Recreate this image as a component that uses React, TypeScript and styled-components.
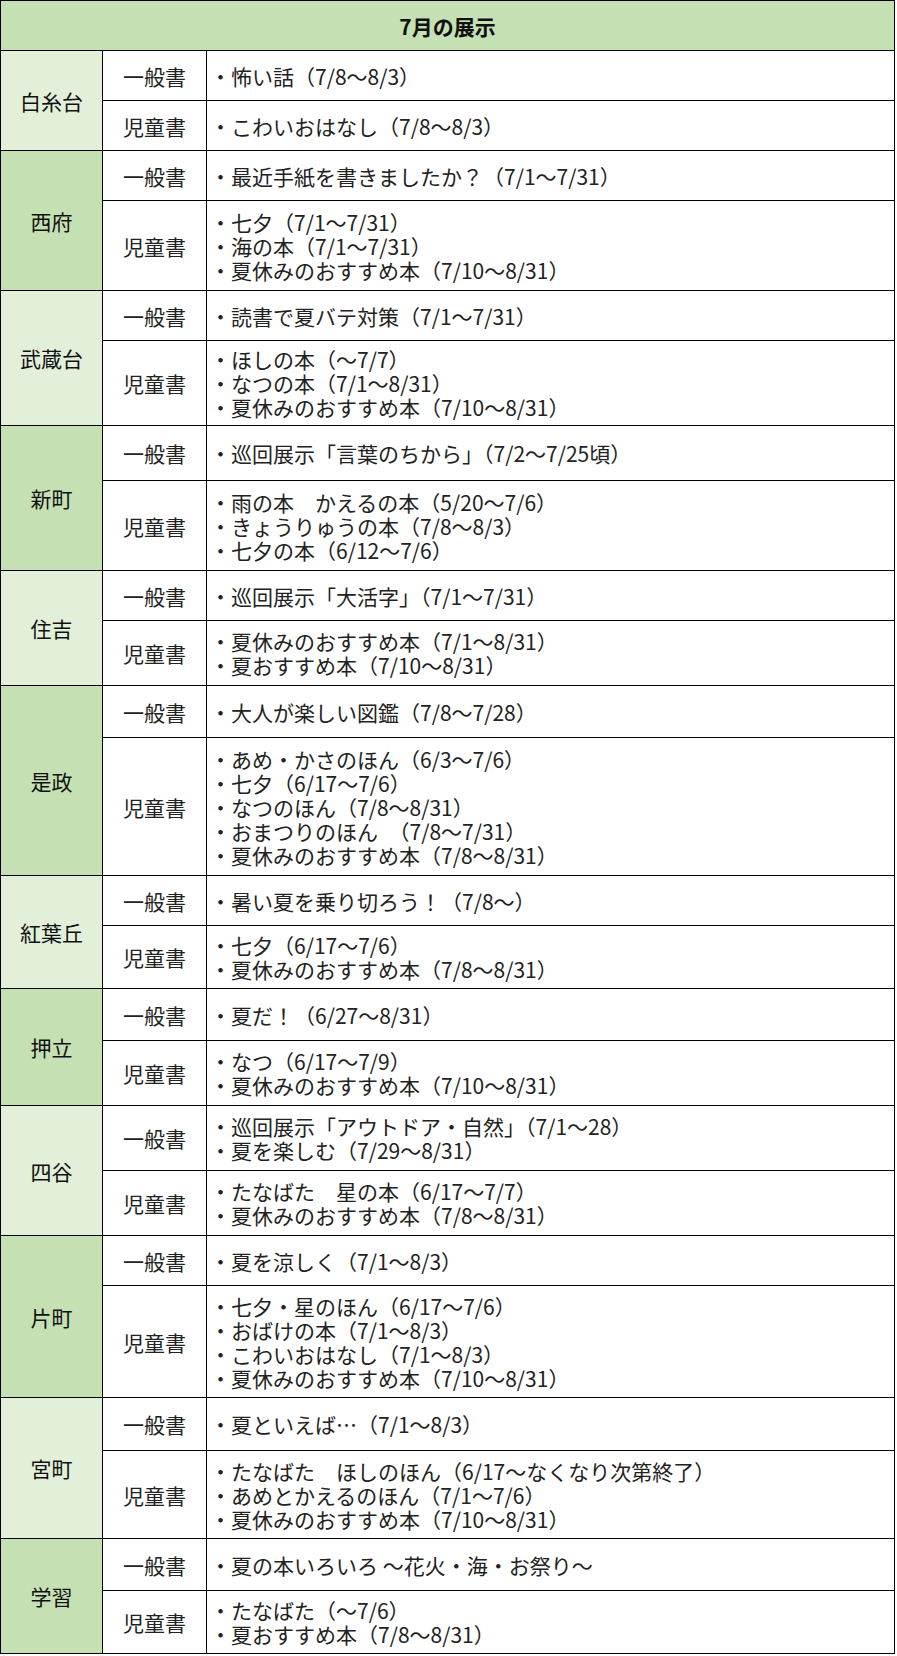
import React from "react";
import styled, { createGlobalStyle } from "styled-components";

const GlobalStyle = createGlobalStyle`
  html, body { margin: 0; padding: 0; background: #ffffff; }
  body {
    font-family: "Noto Sans CJK JP", "Noto Sans", sans-serif;
    color: #111;
  }
  * { box-sizing: border-box; }
`;

const LIGHT = "#e2efd9";
const DARK = "#c5e0b3";

type Row = { type: string; items: string[]; h: number };
type Group = { name: string; rows: [Row, Row] };

const data: Group[] = [
  {
    name: "白糸台",
    rows: [
      { type: "一般書", items: ["・怖い話（7/8～8/3）"], h: 50 },
      { type: "児童書", items: ["・こわいおはなし（7/8～8/3）"], h: 50 },
    ],
  },
  {
    name: "西府",
    rows: [
      { type: "一般書", items: ["・最近手紙を書きましたか？（7/1～7/31）"], h: 50 },
      {
        type: "児童書",
        items: ["・七夕（7/1～7/31）", "・海の本（7/1～7/31）", "・夏休みのおすすめ本（7/10～8/31）"],
        h: 90,
      },
    ],
  },
  {
    name: "武蔵台",
    rows: [
      { type: "一般書", items: ["・読書で夏バテ対策（7/1～7/31）"], h: 50 },
      {
        type: "児童書",
        items: ["・ほしの本（～7/7）", "・なつの本（7/1～8/31）", "・夏休みのおすすめ本（7/10～8/31）"],
        h: 85,
      },
    ],
  },
  {
    name: "新町",
    rows: [
      { type: "一般書", items: ["・巡回展示「言葉のちから」（7/2～7/25頃）"], h: 55 },
      {
        type: "児童書",
        items: ["・雨の本　かえるの本（5/20～7/6）", "・きょうりゅうの本（7/8～8/3）", "・七夕の本（6/12～7/6）"],
        h: 90,
      },
    ],
  },
  {
    name: "住吉",
    rows: [
      { type: "一般書", items: ["・巡回展示「大活字」（7/1～7/31）"], h: 50 },
      {
        type: "児童書",
        items: ["・夏休みのおすすめ本（7/1～8/31）", "・夏おすすめ本（7/10～8/31）"],
        h: 65,
      },
    ],
  },
  {
    name: "是政",
    rows: [
      { type: "一般書", items: ["・大人が楽しい図鑑（7/8～7/28）"], h: 52 },
      {
        type: "児童書",
        items: [
          "・あめ・かさのほん（6/3～7/6）",
          "・七夕（6/17～7/6）",
          "・なつのほん（7/8～8/31）",
          "・おまつりのほん　（7/8～7/31）",
          "・夏休みのおすすめ本（7/8～8/31）",
        ],
        h: 138,
      },
    ],
  },
  {
    name: "紅葉丘",
    rows: [
      { type: "一般書", items: ["・暑い夏を乗り切ろう！（7/8～）"], h: 50 },
      {
        type: "児童書",
        items: ["・七夕（6/17～7/6）", "・夏休みのおすすめ本（7/8～8/31）"],
        h: 63,
      },
    ],
  },
  {
    name: "押立",
    rows: [
      { type: "一般書", items: ["・夏だ！（6/27～8/31）"], h: 52 },
      {
        type: "児童書",
        items: ["・なつ（6/17～7/9）", "・夏休みのおすすめ本（7/10～8/31）"],
        h: 65,
      },
    ],
  },
  {
    name: "四谷",
    rows: [
      {
        type: "一般書",
        items: ["・巡回展示「アウトドア・自然」（7/1～28）", "・夏を楽しむ（7/29～8/31）"],
        h: 65,
      },
      {
        type: "児童書",
        items: ["・たなばた　星の本（6/17～7/7）", "・夏休みのおすすめ本（7/8～8/31）"],
        h: 65,
      },
    ],
  },
  {
    name: "片町",
    rows: [
      { type: "一般書", items: ["・夏を涼しく（7/1～8/3）"], h: 50 },
      {
        type: "児童書",
        items: [
          "・七夕・星のほん（6/17～7/6）",
          "・おばけの本（7/1～8/3）",
          "・こわいおはなし（7/1～8/3）",
          "・夏休みのおすすめ本（7/10～8/31）",
        ],
        h: 112,
      },
    ],
  },
  {
    name: "宮町",
    rows: [
      { type: "一般書", items: ["・夏といえば…（7/1～8/3）"], h: 53 },
      {
        type: "児童書",
        items: [
          "・たなばた　ほしのほん（6/17～なくなり次第終了）",
          "・あめとかえるのほん（7/1～7/6）",
          "・夏休みのおすすめ本（7/10～8/31）",
        ],
        h: 88,
      },
    ],
  },
  {
    name: "学習",
    rows: [
      { type: "一般書", items: ["・夏の本いろいろ ～花火・海・お祭り～"], h: 52 },
      {
        type: "児童書",
        items: ["・たなばた（～7/6）", "・夏おすすめ本（7/8～8/31）"],
        h: 63,
      },
    ],
  },
];

const Table = styled.div`
  width: 895px;
  border-top: 1px solid #000;
  border-left: 1px solid #000;
  font-size: 21px;
  line-height: 24px;
`;

const Header = styled.div`
  height: 50px;
  background: ${DARK};
  border-right: 1px solid #000;
  border-bottom: 1px solid #000;
  display: flex;
  align-items: center;
  justify-content: center;
  font-weight: 700;
  font-size: 21px;
  color: #111;
`;

const GroupGrid = styled.div<{ $top: number; $bottom: number }>`
  display: grid;
  grid-template-columns: 102px 104px 1fr;
  grid-template-rows: ${(p) => `${p.$top}px ${p.$bottom}px`};
`;

const LocCell = styled.div<{ $bg: string }>`
  grid-row: 1 / span 2;
  background: ${(p) => p.$bg};
  border-right: 1px solid #000;
  border-bottom: 1px solid #000;
  display: flex;
  align-items: center;
  justify-content: center;
  color: #111;
`;

const TypeCell = styled.div`
  border-right: 1px solid #000;
  border-bottom: 1px solid #000;
  display: flex;
  align-items: center;
  justify-content: center;
  color: #222;
`;

const ContentCell = styled.div`
  border-right: 1px solid #000;
  border-bottom: 1px solid #000;
  display: flex;
  flex-direction: column;
  justify-content: center;
  padding: 0 0 0 3px;
  color: #222;
  white-space: nowrap;
`;

const Line = styled.div`
  line-height: 24px;
`;

export default function App() {
  return (
    <>
      <GlobalStyle />
      <Table>
        <Header>7月の展示</Header>
        {data.map((g, i) => (
          <GroupGrid key={g.name} $top={g.rows[0].h} $bottom={g.rows[1].h}>
            <LocCell $bg={i % 2 === 0 ? LIGHT : DARK}>{g.name}</LocCell>
            {g.rows.map((r) => (
              <React.Fragment key={r.type}>
                <TypeCell>{r.type}</TypeCell>
                <ContentCell>
                  {r.items.map((t, k) => (
                    <Line key={k}>{t}</Line>
                  ))}
                </ContentCell>
              </React.Fragment>
            ))}
          </GroupGrid>
        ))}
      </Table>
    </>
  );
}
